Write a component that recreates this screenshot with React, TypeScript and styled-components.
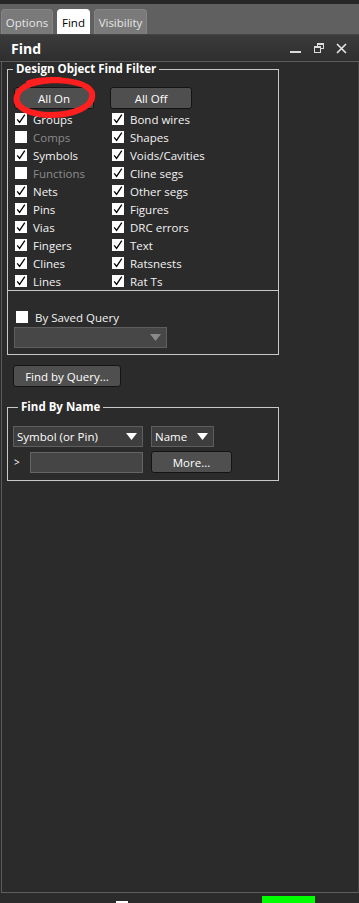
import React from "react";
import styled, { createGlobalStyle } from "styled-components";

const Global = createGlobalStyle`
  html, body { margin: 0; padding: 0; background: #2b2b2b; }
  body { font-family: "Open Sans", "Noto Sans", sans-serif; }
  * { box-sizing: border-box; }
`;

const Root = styled.div`
  position: relative;
  width: 359px;
  height: 903px;
  display: flex;
  flex-direction: column;
  background: #2b2b2b;
  overflow: hidden;
  font-size: 11.5px;
  color: #f2f2f2;
`;

const TopBar = styled.div`
  height: 4px;
  flex: none;
  background: #262626;
`;

const TabStrip = styled.div`
  height: 31px;
  flex: none;
  background: #606060;
  border-bottom: 1px solid #454545;
  display: flex;
  align-items: flex-end;
  gap: 4px;
  padding-left: 1px;
`;

const Tab = styled.div<{ $active?: boolean; $w: number }>`
  width: ${(p) => p.$w}px;
  height: 25px;
  border-radius: 4px 4px 0 0;
  display: flex;
  align-items: center;
  justify-content: center;
  font-size: 11.5px;
  background: ${(p) => (p.$active ? "#ffffff" : "#7a7a7a")};
  color: ${(p) => (p.$active ? "#000000" : "#e6e6e6")};
  border: 1px solid ${(p) => (p.$active ? "#ffffff" : "#858585")};
  border-bottom: none;
`;

const TitleBar = styled.div`
  height: 27px;
  flex: none;
  background: linear-gradient(#3b3b3b, #2e2e2e);
  border-bottom: 1px solid #5c5c5c;
  display: flex;
  align-items: center;
  padding: 0 8px 0 11px;
`;

const Title = styled.div`
  font-weight: 700;
  font-size: 14px;
  color: #ffffff;
  flex: 1;
`;

const TitleIcons = styled.div`
  display: flex;
  align-items: center;
`;

const IconSlot = styled.div<{ $w: number }>`
  width: ${(p) => p.$w}px;
  height: 14px;
  display: flex;
  align-items: center;
  justify-content: center;
`;

const Panel = styled.div`
  flex: 1;
  margin-left: 1px;
  border-left: 1px solid #5a5a5a;
  border-right: 1px solid #444;
  border-bottom: 1px solid #5f5f5f;
  padding: 0 0 0 5px;
  display: flex;
  flex-direction: column;
  align-items: flex-start;
`;

const GroupBox = styled.fieldset<{ $pad?: string; $mt?: number }>`
  margin: ${(p) => p.$mt ?? 0}px 0 0 0;
  width: 272px;
  min-width: 0;
  border: 1px solid #c8c8c8;
  padding: ${(p) => p.$pad ?? "0"};
`;

const Legend = styled.legend`
  font-weight: 700;
  font-size: 11.5px;
  line-height: 14px;
  padding: 0 3px;
  margin-left: 5px;
  color: #ffffff;
`;

const FilterTop = styled.div`
  padding: 11px 0 0 6px;
`;

const ButtonRow = styled.div`
  display: flex;
  gap: 16px;
`;

const Button = styled.button<{ $w: number; $ml?: number; $mt?: number }>`
  width: ${(p) => p.$w}px;
  height: 22px;
  margin: ${(p) => p.$mt ?? 0}px 0 0 ${(p) => p.$ml ?? 0}px;
  background: #4f4f4f;
  border: 1px solid #141414;
  border-radius: 3px;
  color: #ffffff;
  font-family: inherit;
  font-size: 11.5px;
  padding: 0;
  flex: none;
`;

const CheckGrid = styled.div`
  display: grid;
  grid-template-columns: 97px 1fr;
  grid-auto-rows: 18px;
  margin-top: 1px;
  padding-left: 1px;
`;

const CheckRow = styled.label<{ $disabled?: boolean }>`
  display: flex;
  align-items: center;
  gap: 6px;
  color: ${(p) => (p.$disabled ? "#8c8c8c" : "#f2f2f2")};
  white-space: nowrap;
`;

const Box = styled.span<{ $ml?: number }>`
  width: 12px;
  height: 12px;
  background: #ffffff;
  flex: none;
  display: flex;
  align-items: center;
  justify-content: center;
  margin-left: ${(p) => p.$ml ?? 0}px;
`;

const SavedSection = styled.div`
  border-top: 1px solid #c8c8c8;
  padding: 17px 0 6px 6px;
  display: flex;
  flex-direction: column;
  gap: 1px;
`;

const SavedRow = styled.div`
  height: 18px;
  display: flex;
  align-items: center;
  gap: 7px;
`;

const Select = styled.div<{ $w: number; $disabled?: boolean }>`
  width: ${(p) => p.$w}px;
  height: 21px;
  background: ${(p) => (p.$disabled ? "#474747" : "#3e3e3e")};
  border: 1px solid #5e5e5e;
  display: flex;
  align-items: center;
  justify-content: space-between;
  padding: 0 5px 0 3px;
  color: #ffffff;
  font-size: 11.5px;
  flex: none;
`;

const NameRow = styled.div<{ $mt?: number }>`
  display: flex;
  align-items: center;
  gap: 8px;
  margin-top: ${(p) => p.$mt ?? 0}px;
`;

const Prompt = styled.span`
  width: 8px;
  margin-left: 1px;
  font-size: 10px;
  color: #ffffff;
  flex: none;
`;

const TextInput = styled.div`
  width: 113px;
  height: 21px;
  background: #454545;
  border: 1px solid #656565;
  flex: none;
`;

const BottomStrip = styled.div`
  height: 10px;
  flex: none;
  background: #2b2b2b;
  display: flex;
  align-items: flex-start;
  overflow: hidden;
`;

const StripItem = styled.div<{ $ml: number; $mt: number; $w: number; $h: number; $bg?: string }>`
  margin-left: ${(p) => p.$ml}px;
  margin-top: ${(p) => p.$mt}px;
  width: ${(p) => p.$w}px;
  height: ${(p) => p.$h}px;
  background: ${(p) => p.$bg ?? "transparent"};
  flex: none;
`;

const Scribble = styled.svg`
  position: absolute;
  left: 10px;
  top: 74px;
  pointer-events: none;
`;

const Check = () => (
  <svg width="12" height="12" viewBox="0 0 12 12">
    <path d="M2.2 6.3 L4.6 9.4 L9.8 1.6" fill="none" stroke="#000" strokeWidth="1.3" />
  </svg>
);

const Triangle = ({ color }: { color: string }) => (
  <svg width="11" height="7" viewBox="0 0 11 7">
    <path d="M0 0 H11 L5.5 7 Z" fill={color} />
  </svg>
);

type Item = { label: string; checked: boolean; disabled?: boolean };

const left: Item[] = [
  { label: "Groups", checked: true },
  { label: "Comps", checked: false, disabled: true },
  { label: "Symbols", checked: true },
  { label: "Functions", checked: false, disabled: true },
  { label: "Nets", checked: true },
  { label: "Pins", checked: true },
  { label: "Vias", checked: true },
  { label: "Fingers", checked: true },
  { label: "Clines", checked: true },
  { label: "Lines", checked: true },
];

const right: Item[] = [
  { label: "Bond wires", checked: true },
  { label: "Shapes", checked: true },
  { label: "Voids/Cavities", checked: true },
  { label: "Cline segs", checked: true },
  { label: "Other segs", checked: true },
  { label: "Figures", checked: true },
  { label: "DRC errors", checked: true },
  { label: "Text", checked: true },
  { label: "Ratsnests", checked: true },
  { label: "Rat Ts", checked: true },
];

export default function App() {
  const rows: Item[] = [];
  left.forEach((l, i) => {
    rows.push(l);
    rows.push(right[i]);
  });
  return (
    <Root>
      <Global />
      <TopBar />
      <TabStrip>
        <Tab $w={52}>Options</Tab>
        <Tab $w={33} $active>
          Find
        </Tab>
        <Tab $w={53}>Visibility</Tab>
      </TabStrip>
      <TitleBar>
        <Title>Find</Title>
        <TitleIcons>
          <IconSlot $w={24}>
            <svg width="11" height="14" viewBox="0 0 11 14">
              <rect x="0" y="10" width="11" height="2" fill="#dcdcdc" />
            </svg>
          </IconSlot>
          <IconSlot $w={24}>
            <svg width="10" height="10" viewBox="0 0 10 10">
              <rect x="3.5" y="0.5" width="6" height="5" fill="none" stroke="#dcdcdc" strokeWidth="1" />
              <rect x="3.5" y="0.5" width="6" height="1.5" fill="#dcdcdc" />
              <rect x="0.5" y="3.5" width="6" height="6" fill="#333" stroke="#dcdcdc" strokeWidth="1" />
              <rect x="0.5" y="3.5" width="6" height="1.5" fill="#dcdcdc" />
            </svg>
          </IconSlot>
          <IconSlot $w={20}>
            <svg width="11" height="11" viewBox="0 0 11 11">
              <path d="M1 1 L10 10 M10 1 L1 10" stroke="#e6e6e6" strokeWidth="1.6" />
            </svg>
          </IconSlot>
        </TitleIcons>
      </TitleBar>
      <Panel>
        <GroupBox>
          <Legend>Design Object Find Filter</Legend>
          <FilterTop>
            <ButtonRow>
              <Button $w={80}>All On</Button>
              <Button $w={82}>All Off</Button>
            </ButtonRow>
            <CheckGrid>
              {rows.map((r) => (
                <CheckRow key={r.label} $disabled={r.disabled}>
                  <Box>{r.checked && <Check />}</Box>
                  {r.label}
                </CheckRow>
              ))}
            </CheckGrid>
          </FilterTop>
          <SavedSection>
            <SavedRow>
              <Box $ml={2} />
              By Saved Query
            </SavedRow>
            <Select $w={153} $disabled>
              <span />
              <Triangle color="#8a8a8a" />
            </Select>
          </SavedSection>
        </GroupBox>
        <Button $w={108} $ml={6} $mt={10}>
          Find by Query...
        </Button>
        <GroupBox $mt={13} $pad="12px 0 7px 5px">
          <Legend>Find By Name</Legend>
          <NameRow>
            <Select $w={130}>
              <span>Symbol (or Pin)</span>
              <Triangle color="#ffffff" />
            </Select>
            <Select $w={63}>
              <span>Name</span>
              <Triangle color="#ffffff" />
            </Select>
          </NameRow>
          <NameRow $mt={4}>
            <Prompt>&gt;</Prompt>
            <TextInput />
            <Button $w={81}>More...</Button>
          </NameRow>
        </GroupBox>
      </Panel>
      <BottomStrip>
        <StripItem $ml={116} $mt={8} $w={12} $h={2} $bg="#ffffff" />
        <StripItem $ml={42} $mt={6} $w={10} $h={4}>
          <svg width="10" height="4" viewBox="0 0 10 4">
            <path d="M1 0 L3 4 M9 0 L7 4" stroke="#cfcfcf" strokeWidth="1" />
          </svg>
        </StripItem>
        <StripItem $ml={82} $mt={3} $w={53} $h={7} $bg="#00ff00">
          <svg width="53" height="7" viewBox="0 0 53 7">
            <path d="M11 5 L12 4 L13 5 Z" fill="#003300" />
          </svg>
        </StripItem>
        <StripItem $ml={10} $mt={5} $w={6} $h={5}>
          <svg width="6" height="5" viewBox="0 0 6 5">
            <path d="M0.5 0 L5 5" stroke="#e0e0e0" strokeWidth="1.2" />
          </svg>
        </StripItem>
      </BottomStrip>
      <Scribble width="92" height="46" viewBox="10 74 92 46">
        <path
          d="M29 83 C48 77, 88 80, 92 93 C95 107, 72 115, 52 115 C29 115, 14 107, 17 96 C19 86, 36 80, 60 80"
          fill="none"
          stroke="#ff1f1f"
          strokeWidth="6"
          strokeLinecap="round"
        />
      </Scribble>
    </Root>
  );
}
